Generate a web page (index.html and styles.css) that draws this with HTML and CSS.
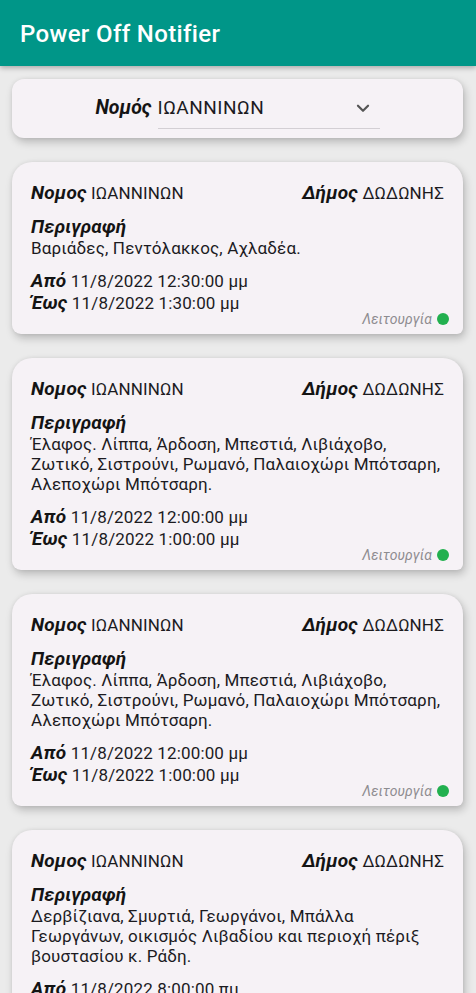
FILE: index.html
```html
<!DOCTYPE html>
<html lang="el">
<head>
<meta charset="utf-8">
<title>Power Off Notifier</title>
<link rel="stylesheet" href="styles.css">
</head>
<body>
<header class="appbar">
  <h1 class="appbar-title">Power Off Notifier</h1>
</header>
<main class="content">
  <section class="filter-card">
    <span class="filter-label">Νομός</span>
    <div class="spinner">
      <span class="spinner-value">ΙΩΑΝΝΙΝΩΝ</span>
      <svg class="spinner-arrow" viewBox="0 0 24 24" width="22" height="22"><path d="M6.5 9.5l5.5 5.5 5.5-5.5" fill="none" stroke="#555" stroke-width="2.4" stroke-linecap="round" stroke-linejoin="round"/></svg>
    </div>
  </section>

  <article class="card">
    <div class="row-top">
      <span><b class="lbl">Νομος</b> ΙΩΑΝΝΙΝΩΝ</span>
      <span><b class="lbl">Δήμος</b> ΔΩΔΩΝΗΣ</span>
    </div>
    <div class="desc-label lbl">Περιγραφή</div>
    <p class="desc">Βαριάδες, Πεντόλακκος, Αχλαδέα.</p>
    <div class="time time-from"><b class="lbl">Από</b> 11/8/2022 12:30:00 μμ</div>
    <div class="time"><b class="lbl">Έως</b> 11/8/2022 1:30:00 μμ</div>
    <div class="status">Λειτουργία <span class="dot"></span></div>
  </article>

  <article class="card">
    <div class="row-top">
      <span><b class="lbl">Νομος</b> ΙΩΑΝΝΙΝΩΝ</span>
      <span><b class="lbl">Δήμος</b> ΔΩΔΩΝΗΣ</span>
    </div>
    <div class="desc-label lbl">Περιγραφή</div>
    <p class="desc">Έλαφος. Λίππα, Άρδοση, Μπεστιά, Λιβιάχοβο, Ζωτικό, Σιστρούνι, Ρωμανό, Παλαιοχώρι Μπότσαρη, Αλεποχώρι Μπότσαρη.</p>
    <div class="time time-from"><b class="lbl">Από</b> 11/8/2022 12:00:00 μμ</div>
    <div class="time"><b class="lbl">Έως</b> 11/8/2022 1:00:00 μμ</div>
    <div class="status">Λειτουργία <span class="dot"></span></div>
  </article>

  <article class="card">
    <div class="row-top">
      <span><b class="lbl">Νομος</b> ΙΩΑΝΝΙΝΩΝ</span>
      <span><b class="lbl">Δήμος</b> ΔΩΔΩΝΗΣ</span>
    </div>
    <div class="desc-label lbl">Περιγραφή</div>
    <p class="desc">Έλαφος. Λίππα, Άρδοση, Μπεστιά, Λιβιάχοβο, Ζωτικό, Σιστρούνι, Ρωμανό, Παλαιοχώρι Μπότσαρη, Αλεποχώρι Μπότσαρη.</p>
    <div class="time time-from"><b class="lbl">Από</b> 11/8/2022 12:00:00 μμ</div>
    <div class="time"><b class="lbl">Έως</b> 11/8/2022 1:00:00 μμ</div>
    <div class="status">Λειτουργία <span class="dot"></span></div>
  </article>

  <article class="card">
    <div class="row-top">
      <span><b class="lbl">Νομος</b> ΙΩΑΝΝΙΝΩΝ</span>
      <span><b class="lbl">Δήμος</b> ΔΩΔΩΝΗΣ</span>
    </div>
    <div class="desc-label lbl">Περιγραφή</div>
    <p class="desc">Δερβίζιανα, Σμυρτιά, Γεωργάνοι, Μπάλλα Γεωργάνων, οικισμός Λιβαδίου και περιοχή πέριξ βουστασίου κ. Ράδη.</p>
    <div class="time time-from"><b class="lbl">Από</b> 11/8/2022 8:00:00 πμ</div>
    <div class="time"><b class="lbl">Έως</b> 11/8/2022 10:00:00 πμ</div>
    <div class="status">Λειτουργία <span class="dot"></span></div>
  </article>
</main>
</body>
</html>
```

FILE: styles.css
```css
* { box-sizing: border-box; }

html, body {
  margin: 0;
  padding: 0;
}

body {
  background: #ebebeb;
  font-family: Roboto, "Noto Sans", sans-serif;
  color: #1c1b1f;
  width: 476px;
  height: 993px;
  overflow: hidden;
}

.appbar {
  height: 66px;
  background: #009688;
  display: flex;
  align-items: center;
  padding-left: 20px;
  box-shadow: 0 2px 5px rgba(0, 0, 0, 0.28);
  position: relative;
  z-index: 2;
}

.appbar-title {
  margin: 0;
  font-size: 24px;
  font-weight: 500;
  color: #ffffff;
  letter-spacing: 0.35px;
  padding-top: 1px;
}

.content {
  display: flex;
  flex-direction: column;
  gap: 24px;
  padding: 13px 13px 20px 12px;
}

.filter-card {
  height: 59px;
  background: #f6f2f6;
  border-radius: 12px;
  box-shadow: 2px 4px 8px rgba(0, 0, 0, 0.22), 0 0 4px rgba(0, 0, 0, 0.06);
  display: flex;
  justify-content: center;
  align-items: flex-start;
  padding-top: 17px;
}

.filter-label {
  font-size: 19.5px;
  font-weight: 700;
  font-style: italic;
  color: #141414;
  line-height: 24px;
  margin-right: 6px;
}

.spinner {
  width: 222px;
  height: 33px;
  border-bottom: 1px solid #d3cfd4;
  display: flex;
  justify-content: space-between;
  align-items: flex-start;
  padding-right: 6px;
}

.spinner-value {
  font-size: 19px;
  letter-spacing: 0.5px;
  line-height: 24px;
  color: #1c1b1f;
}

.spinner-arrow {
  margin-top: 1px;
}

.card {
  width: 100%;
  background: #f6f2f6;
  border-radius: 20px 20px 6px 9px;
  box-shadow: 2px 4px 8px rgba(0, 0, 0, 0.22), 0 0 4px rgba(0, 0, 0, 0.06);
  padding: 20px 19px 7px 19px;
  font-size: 17px;
  letter-spacing: 0.15px;
}

.lbl {
  font-weight: 700;
  font-style: italic;
  color: #141414;
  font-size: 19px;
  letter-spacing: 0.2px;
}

.row-top {
  display: flex;
  justify-content: space-between;
  line-height: 22px;
}

.desc-label {
  display: block;
  line-height: 22px;
  margin-top: 12px;
}

.desc {
  margin: 0;
  max-width: 100%;
  line-height: 20px;
}

.time {
  line-height: 22px;
}

.time-from {
  margin-top: 12px;
}

.status {
  display: flex;
  justify-content: flex-end;
  align-items: center;
  gap: 5px;
  font-size: 14px;
  font-style: italic;
  color: #8e8c90;
  line-height: 16px;
  margin-top: -3px;
  letter-spacing: 0.1px;
}

.dot {
  width: 12px;
  height: 12px;
  border-radius: 50%;
  background: #22b04f;
  margin-right: -5px;
}
```
